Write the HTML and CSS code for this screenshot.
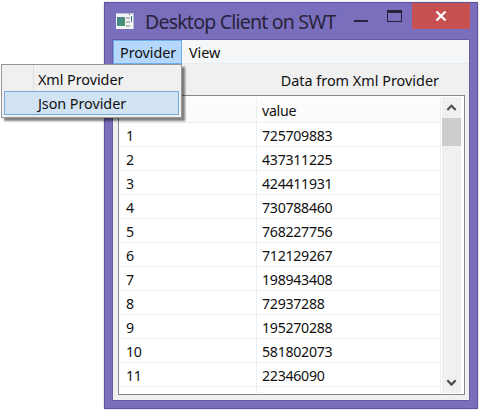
FILE: index.html
```
<!DOCTYPE html>
<html lang="en">
<head>
<meta charset="utf-8">
<title>Desktop Client on SWT</title>
<link rel="stylesheet" href="styles.css">
</head>
<body>
<main class="window">
  <header class="titlebar">
    <svg class="app-icon" width="18" height="16" viewBox="0 0 18 16">
      <defs><linearGradient id="pic" x2="1" y2="1"><stop stop-color="#477e9b"/><stop offset="1" stop-color="#4c9a68"/></linearGradient></defs>
      <path fill="#f3f4f5" d="M0 0h18v16H0z"/>
      <path fill="#b9c0cb" d="M0 0h18v1H0zM17 0h1v16h-1z"/>
      <path fill="#4d5270" d="M13 1h1v1h-1z"/>
      <path fill="url(#pic)" d="M1 4h8v9H1z"/>
      <path fill="#b9bdc3" d="M10 4h4v2h-4zM10 8h4v2h-4zM10 12h4v2h-4z"/>
      <path fill="#397e88" d="M15 3h1v6h-1z"/>
    </svg>
    <h1 class="title">Desktop Client on SWT</h1>
    <div class="controls">
      <svg width="60" height="26" viewBox="0 0 60 26">
        <path fill="#28233a" d="M8 17h14v2H8z"/>
        <path fill="#28233a" fill-rule="evenodd" d="M41 7h15v12H41zM42 10v8h13v-8z"/>
      </svg>
      <span class="close"><svg width="12" height="10" viewBox="0 0 12 10"><path d="M1.5.5l9 9M10.5.5l-9 9" stroke="#fff" stroke-width="2.2"/></svg></span>
    </div>
  </header>
  <section class="client">
    <nav class="menubar"><span class="menu open">Provider</span><span class="menu view">View</span></nav>
    <p class="caption"><span>Data from Xml Provider</span></p>
    <div class="viewer">
      <div class="table">
        <div class="row head"><span></span><span>value</span></div>
        <div class="row"><span>1</span><span>725709883</span></div>
        <div class="row"><span>2</span><span>437311225</span></div>
        <div class="row"><span>3</span><span>424411931</span></div>
        <div class="row"><span>4</span><span>730788460</span></div>
        <div class="row"><span>5</span><span>768227756</span></div>
        <div class="row"><span>6</span><span>712129267</span></div>
        <div class="row"><span>7</span><span>198943408</span></div>
        <div class="row"><span>8</span><span>72937288</span></div>
        <div class="row"><span>9</span><span>195270288</span></div>
        <div class="row"><span>10</span><span>581802073</span></div>
        <div class="row"><span>11</span><span>22346090</span></div>
        <div class="row rest"><span></span><span></span></div>
      </div>
      <div class="scrollbar">
        <svg width="19" height="21" viewBox="0 0 19 21"><path d="M5.3 13l4.2-4.2 4.2 4.2" fill="none" stroke="#505050" stroke-width="2.3"/></svg>
        <div class="thumb"></div>
        <svg class="down" width="19" height="21" viewBox="0 0 19 21"><path d="M5.3 8.3l4.2 4.2 4.2-4.2" fill="none" stroke="#505050" stroke-width="2.3"/></svg>
      </div>
    </div>
  </section>
</main>
<div class="dropdown">
  <div class="item">Xml Provider</div>
  <div class="item selected">Json Provider</div>
</div>
</body>
</html>
```
FILE: styles.css
```
* { box-sizing: border-box; }
body {
  margin: 0;
  height: 410px;
  padding: 2px 0 0 104px;
  overflow: hidden;
  background: #fff;
  color: #111;
  font: 14.4px/24px "Noto Sans", "Open Sans", sans-serif;
  letter-spacing: -0.06px;
}
.window {
  width: 374px;
  height: 407px;
  padding: 0 7px 7px;
  border: 1px solid #60549d;
  background: #7a6fbd;
  box-shadow: 0 0 2px #c5c1df;
}
.titlebar { display: flex; height: 36px; padding-left: 4px; }
.app-icon { margin-top: 10px; flex: none; }
.title {
  margin: 0 0 0 11px;
  flex: none;
  width: 192px;
  color: #28233a;
  font-size: 19.5px;
  font-weight: 400;
  line-height: 37px;
  letter-spacing: -0.78px;
  white-space: nowrap;
}
.controls { display: flex; margin-left: 9px; }
.controls > svg { flex: none; }
.close {
  display: flex;
  flex: none;
  align-items: center;
  justify-content: center;
  width: 58px;
  height: 26px;
  margin-left: 6px;
  background: #c75050;
}
.client {
  height: 362px;
  border: 1px solid #685aa7;
  background: #f0f0f0;
}
.menubar {
  display: flex;
  height: 24px;
  background: #f5f6f7;
  border-bottom: 1px solid #e8ebf0;
}
.menu { height: 24px; line-height: 23px; padding-left: 7px; }
.view { line-height: 25px; }
.open { width: 69px; padding-left: 6px; background: #b5d7fb; border: 1px solid #6cadeb; }
.caption { margin: 0; height: 31px; padding: 5px 30px 0 0; text-align: right; letter-spacing: 0.01px; }
.viewer {
  display: flex;
  width: 347px;
  height: 300px;
  margin-left: 5px;
  padding: 1px 3px 1px 1px;
  border: 1px solid #828790;
  background: #fff;
}
.table { width: 321px; overflow: hidden; font-size: 14.2px; letter-spacing: -0.3px; }
.row {
  display: grid;
  grid-template-columns: 137px 1fr;
  height: 24px;
  border-bottom: 1px solid #edf0f3;
}
.row span { padding-left: 6px; border-right: 1px solid #edf0f3; line-height: 25px; }
.row span:last-child { padding-left: 5px; }
.head { height: 26px; background: #fcfcfc; }
.head span { line-height: 27px; }
.rest { height: 6px; border: 0; }
.scrollbar {
  display: flex;
  flex-direction: column;
  width: 19px;
  margin-left: 1px;
  background: #f0f0f0;
}
.thumb { height: 28px; background: #cdcdcd; }
.down { margin-top: auto; }
.dropdown {
  position: absolute;
  left: 1px;
  top: 64px;
  width: 181px;
  height: 54px;
  padding: 2px;
  border: 1px solid #979797;
  background: linear-gradient(90deg, transparent 31px, #dedede 31px, #dedede 32px, transparent 32px) #f0f0f0;
  box-shadow: 3px 3px 2px rgba(0, 0, 0, .5);
}
.item { height: 24px; padding-left: 34px; line-height: 25px; }
.selected { padding-left: 33px; border: 1px solid #78a8dc; background: #d1e2f2; line-height: 23px; }
```
